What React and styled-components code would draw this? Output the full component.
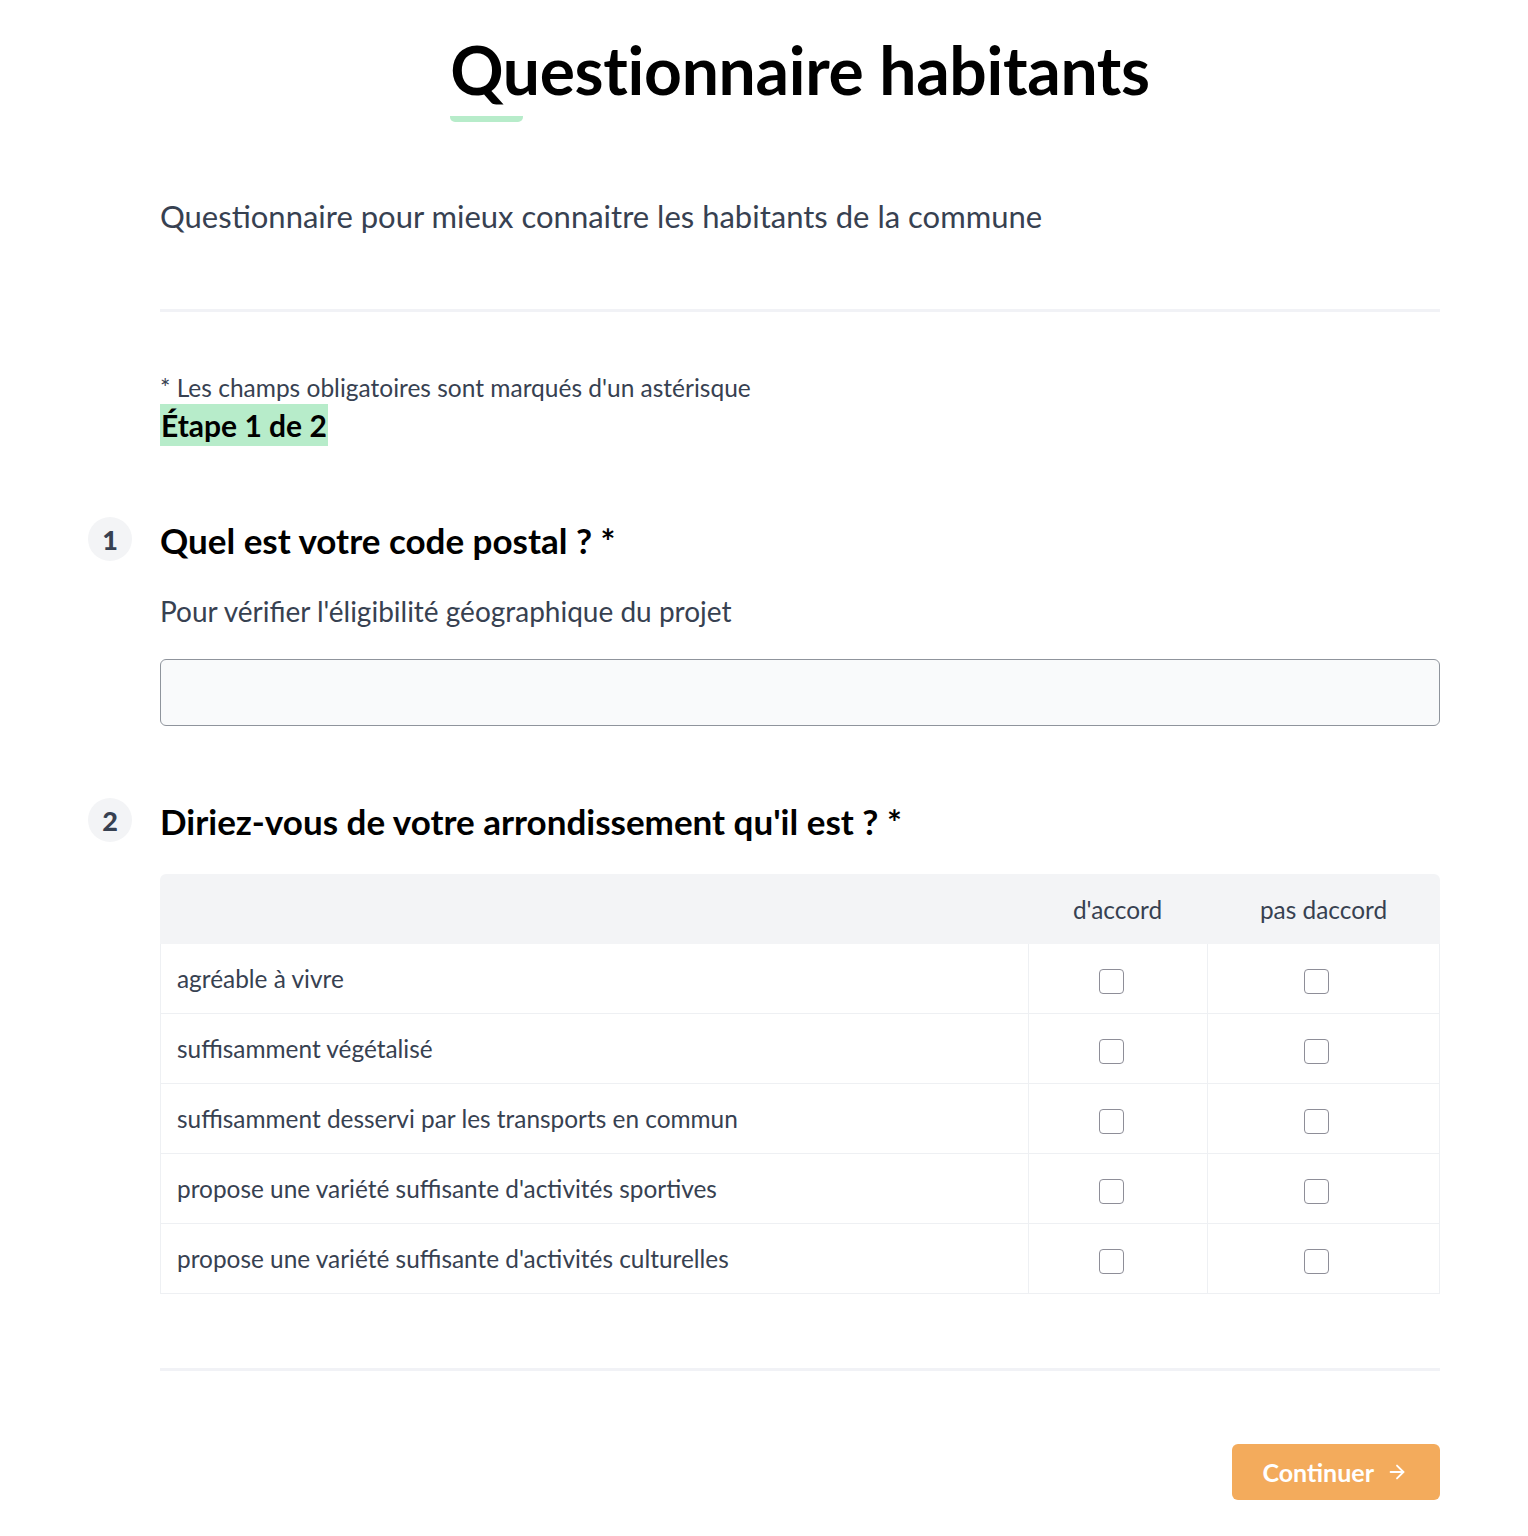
import React from "react";
import styled, { createGlobalStyle } from "styled-components";
import { ArrowRight } from "lucide-react";

const GlobalStyle = createGlobalStyle`
  body {
    margin: 0;
    background: #ffffff;
    font-family: "Lato", "Noto Sans", sans-serif;
    color: #111827;
  }
`;

const Page = styled.div`
  padding: 0 88px 40px 160px;
`;

const Header = styled.header`
  display: flex;
  flex-direction: column;
  align-items: center;
  padding-top: 30px;
`;

const Title = styled.h1`
  margin: 0;
  font-size: 66px;
  font-weight: 700;
  line-height: 80px;
  color: #000;
  letter-spacing: -0.3px;
`;

const TitleBar = styled.span`
  display: block;
  width: 73px;
  height: 6px;
  margin-top: 6px;
  background: #b7ecca;
  border-radius: 0 0 5px 5px;
`;

const TitleWrap = styled.div`
  display: flex;
  flex-direction: column;
  align-items: flex-start;
`;

const Subtitle = styled.p`
  margin: 74px 0 0;
  font-size: 31px;
  line-height: 40px;
  color: #374151;
`;

const Divider = styled.hr`
  margin: ${(p) => p.$top}px 0 0;
  border: none;
  height: 3px;
  background: #f1f2f6;
`;

const Required = styled.p`
  margin: 60px 0 0;
  font-size: 24.5px;
  line-height: 32px;
  color: #374151;
`;

const Step = styled.span`
  display: table;
  padding: 0 1px;
  font-size: 30px;
  font-weight: 700;
  line-height: 42px;
  background: #b7ecca;
  color: #000;
`;

const Question = styled.section`
  display: grid;
  grid-template-columns: 72px 1fr;
  margin: ${(p) => p.$top}px 0 0 -72px;
`;

const Badge = styled.div`
  width: 44px;
  height: 44px;
  border-radius: 50%;
  background: #f3f4f6;
  color: #374151;
  font-size: 27px;
  font-weight: 900;
  display: flex;
  align-items: center;
  justify-content: center;
  margin-top: -1px;
`;

const QuestionBody = styled.div`
  display: flex;
  flex-direction: column;
`;

const QuestionTitle = styled.h2`
  margin: 0;
  font-size: 35px;
  font-weight: 700;
  line-height: 44px;
  color: #000;
`;

const Description = styled.p`
  margin: 30px 0 0;
  font-size: 28px;
  line-height: 38px;
  color: #374151;
`;

const TextInput = styled.input`
  box-sizing: border-box;
  margin-top: 29px;
  width: 100%;
  height: 67px;
  border: 1px solid #8f949c;
  border-radius: 6px;
  background: #f9fafb;
  font-family: inherit;
  font-size: 24px;
  padding: 0 16px;
`;

const Table = styled.table`
  margin-top: 31px;
  width: 100%;
  border-collapse: separate;
  border-spacing: 0;
  font-size: 24.4px;
  color: #374151;
`;

const HeadCell = styled.th`
  height: 70px;
  padding: 0;
  background: #f3f4f6;
  font-weight: 400;
  text-align: center;
  width: ${(p) => p.$w || "auto"};
  &:first-child {
    border-top-left-radius: 6px;
  }
  &:last-child {
    border-top-right-radius: 6px;
  }
`;

const LabelCell = styled.td`
  height: 69px;
  padding: 0 16px;
  border-bottom: 1px solid #eef0f3;
  border-left: 1px solid #eef0f3;
`;

const CheckCell = styled.td`
  height: 69px;
  padding: 0;
  text-align: center;
  border-bottom: 1px solid #eef0f3;
  border-left: 1px solid #eef0f3;
  &:last-child {
    border-right: 1px solid #eef0f3;
  }
`;

const Checkbox = styled.input.attrs({ type: "checkbox" })`
  appearance: none;
  display: inline-block;
  vertical-align: middle;
  width: 25px;
  height: 25px;
  margin: 0 14px 0 0;
  border: 1.5px solid #8e8e98;
  border-radius: 4px;
  background: #fff;
`;

const Footer = styled.div`
  display: flex;
  justify-content: flex-end;
  margin-top: 73px;
`;

const Button = styled.button`
  display: flex;
  align-items: center;
  gap: 12px;
  height: 56px;
  padding: 0 32px 0 30px;
  border: none;
  border-radius: 6px;
  background: #f3ab5c;
  color: #fff;
  font-family: inherit;
  font-size: 25px;
  font-weight: 700;
`;

const rows = [
  "agréable à vivre",
  "suffisamment végétalisé",
  "suffisamment desservi par les transports en commun",
  "propose une variété suffisante d'activités sportives",
  "propose une variété suffisante d'activités culturelles",
];

export default function App() {
  return (
    <>
      <GlobalStyle />
      <Page>
        <Header>
          <TitleWrap>
            <Title>Questionnaire habitants</Title>
            <TitleBar />
          </TitleWrap>
        </Header>
        <Subtitle>Questionnaire pour mieux connaitre les habitants de la commune</Subtitle>
        <Divider $top={73} />
        <Required>* Les champs obligatoires sont marqués d'un astérisque</Required>
        <Step>Étape 1 de 2</Step>

        <Question $top={72}>
          <Badge>1</Badge>
          <QuestionBody>
            <QuestionTitle>Quel est votre code postal ? *</QuestionTitle>
            <Description>Pour vérifier l'éligibilité géographique du projet</Description>
            <TextInput type="text" />
          </QuestionBody>
        </Question>

        <Question $top={73}>
          <Badge>2</Badge>
          <QuestionBody>
            <QuestionTitle>Diriez-vous de votre arrondissement qu'il est ? *</QuestionTitle>
            <Table>
              <thead>
                <tr>
                  <HeadCell />
                  <HeadCell $w="179px">d'accord</HeadCell>
                  <HeadCell $w="233px">pas daccord</HeadCell>
                </tr>
              </thead>
              <tbody>
                {rows.map((r) => (
                  <tr key={r}>
                    <LabelCell>{r}</LabelCell>
                    <CheckCell>
                      <Checkbox />
                    </CheckCell>
                    <CheckCell>
                      <Checkbox />
                    </CheckCell>
                  </tr>
                ))}
              </tbody>
            </Table>
          </QuestionBody>
        </Question>

        <Divider $top={74} />
        <Footer>
          <Button>
            Continuer
            <ArrowRight size={22} strokeWidth={2} />
          </Button>
        </Footer>
      </Page>
    </>
  );
}
